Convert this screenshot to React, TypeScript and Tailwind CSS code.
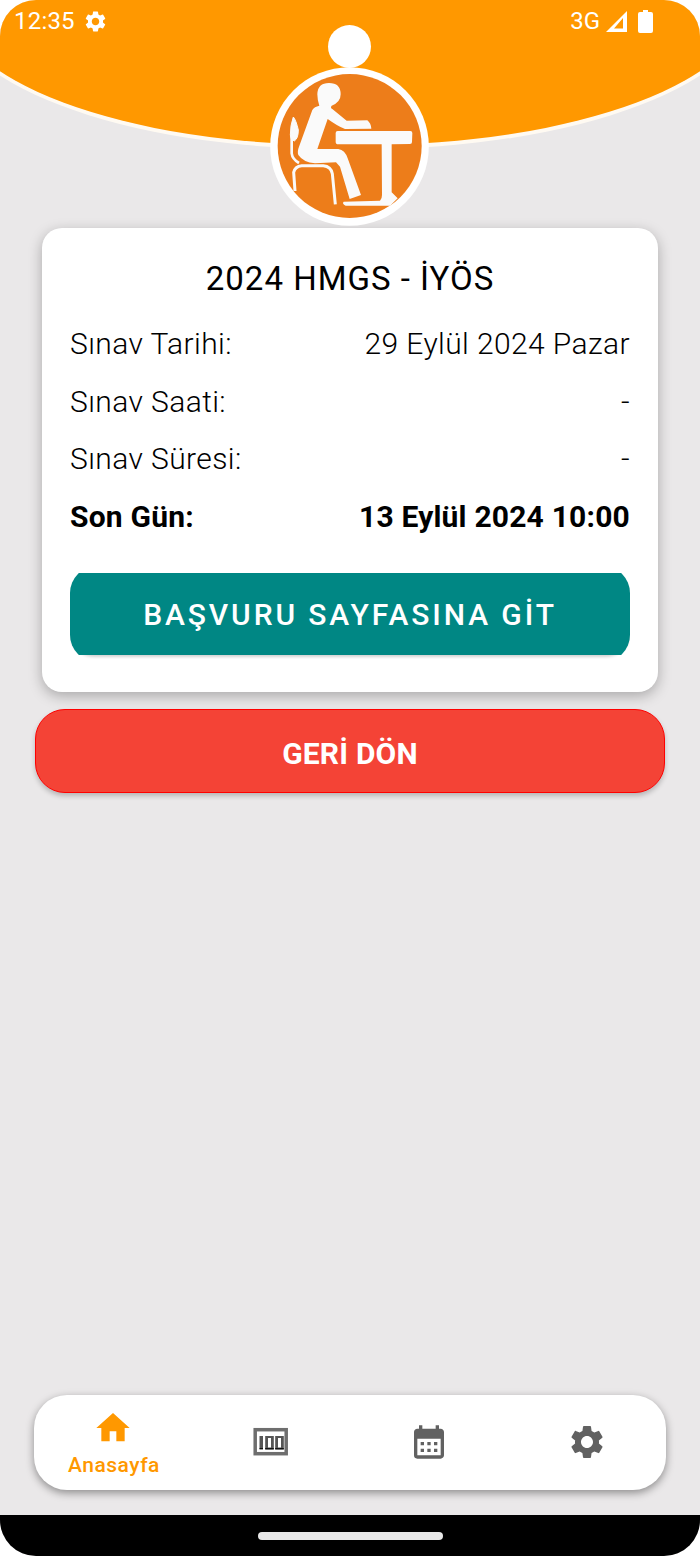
import { MdHome, MdSettings, MdCalendarMonth } from "react-icons/md";

const rows = [
  ["Sınav Tarihi:", "29 Eylül 2024 Pazar"],
  ["Sınav Saati:", "-"],
  ["Sınav Süresi:", "-"],
];

function Logo() {
  return (
    <svg viewBox="0 0 477 477" className="block w-[159px] h-[159px]">
      <circle cx="238.5" cy="238.5" r="238" fill="#ffffff" />
      <circle cx="239" cy="237" r="216" fill="#ed7d1a" />
      <g transform="translate(15 24)" fill="#fafafa">
        <path d="M162 24 Q197 24 197 58 Q197 82 170 92 Q165 98 172 102 L215 137 L277 136 Q288 145 289 161 L210 162 Q190 155 158 132 L127 222 L190 222 Q210 225 218 250 L258 360 L224 372 L195 275 L183 262 L120 265 Q85 262 70 240 Q66 230 72 215 L112 105 Q118 95 133 92 Q127 75 127 58 Q128 24 162 24 Z" />
        <path d="M188 168 L406 168 Q412 168 412 174 L411 201 Q411 207 405 207 L350 208 L350 352 L368 370 L345 392 L212 392 Q200 386 206 380 L315 377 Q321 372 321 360 L320 208 L190 208 Q182 208 182 200 L182 174 Q182 168 188 168 Z" />
      </g>
      <g transform="translate(15 24)" fill="none" stroke="#fafafa">
        <path d="M50 180 L50 235 Q52 252 72 264" strokeWidth="8" />
        <path d="M55 126 Q63 135 70 165 Q70 190 58 198 Q46 195 46 180 Q46 150 55 126 Z" fill="#fafafa" strokeWidth="3" />
        <path d="M60 348 L56 292 Q60 274 80 272 L145 272 Q168 274 172 296 L181 388" strokeWidth="9" />
      </g>
    </svg>
  );
}

function ScoreIcon() {
  return (
    <svg viewBox="0 0 36 36" className="block w-[36px] h-[36px]">
      <rect x="2.2" y="5.7" width="31" height="24" fill="none" stroke="#6e6e6e" strokeWidth="3.5" />
      <rect x="6.5" y="12" width="3.5" height="13" fill="#555555" />
      <rect x="6.5" y="24" width="3.5" height="1.4" fill="#111111" />
      <rect x="12.2" y="12" width="8.6" height="13.4" fill="#555555" />
      <rect x="15" y="14" width="3" height="9.5" fill="#ffffff" />
      <rect x="12.2" y="24" width="8.6" height="1.4" fill="#111111" />
      <rect x="22.2" y="12" width="8.6" height="13.4" fill="#555555" />
      <rect x="25" y="14" width="3" height="9.5" fill="#ffffff" />
      <rect x="22.2" y="24" width="8.6" height="1.4" fill="#111111" />
    </svg>
  );
}

export default function App() {
  return (
    <div className="bg-white w-[700px] h-[1556px] font-['Roboto',sans-serif]">
      <div className="relative w-[700px] h-[1556px] bg-[#eae8e9] rounded-[36px] overflow-hidden flex flex-col">
        <div className="absolute inset-x-0 top-0 h-[42px] flex items-center justify-between pl-[14px] pr-[47px] text-white z-10">
          <div className="flex items-center gap-[10px]">
            <span className="text-[24px] leading-[30px] tracking-[0.2px]">12:35</span>
            <MdSettings className="w-[25px] h-[25px] -ml-[2px]" />
          </div>
          <div className="flex items-center">
            <span className="text-[24px] leading-[30px]">3G</span>
            <svg viewBox="0 0 21 21" className="ml-[6px] w-[21px] h-[21px]">
              <path d="M21 0 L21 21 L0 21 Z M17 7 L8 17.5 L17 17.5 Z" fill="#ffffff" fillRule="evenodd" />
            </svg>
            <svg viewBox="0 0 15 23" className="ml-[11px] w-[15px] h-[23px]">
              <path d="M5 0 H10 V2 H13 Q15 2 15 4 V21 Q15 23 13 23 H2 Q0 23 0 21 V4 Q0 2 2 2 H5 Z" fill="#ffffff" />
            </svg>
          </div>
        </div>

        <div className="relative shrink-0 h-[228px]">
          <div className="w-[800px] -ml-[50px] h-[145px] bg-[#ff9800] shadow-[0_0_0_4px_#fffaf2] rounded-b-[400px_150px]" />
          <div className="absolute left-[328px] top-[25px] w-[43px] h-[43px] rounded-full bg-white" />
          <div className="absolute left-[270px] top-[67px]">
            <Logo />
          </div>
        </div>

        <div className="mx-[42px] h-[464px] bg-white rounded-[20px] shadow-[0_4px_14px_rgba(0,0,0,0.28)] px-[28px] pt-[32px] flex flex-col text-black">
          <h1 className="text-[33px] leading-[38px] font-normal tracking-[1px] text-center">2024 HMGS - İYÖS</h1>
          <div className="mt-[26px] flex flex-col gap-[17.67px] text-[30px] leading-[40px] font-light tracking-[0.4px]">
            {rows.map(([a, b]) => (
              <div key={a} className="flex justify-between">
                <span>{a}</span>
                <span>{b}</span>
              </div>
            ))}
            <div className="flex justify-between font-bold tracking-[0.2px]">
              <span>Son Gün:</span>
              <span>13 Eylül 2024 10:00</span>
            </div>
          </div>
          <div className="mt-[36px] h-[86px] overflow-hidden">
            <div className="h-[82px] rounded-b-[24px] shadow-[0_2px_3px_rgba(0,0,0,0.18)]">
              <div className="h-[82px] overflow-hidden">
                <div className="-mt-[7px] pt-[1px] h-[96px] rounded-[27px] bg-[#008784] flex items-center justify-center text-white text-[30px] font-medium tracking-[2.9px]">
                  BAŞVURU SAYFASINA GİT
                </div>
              </div>
            </div>
          </div>
        </div>

        <div className="mt-[17px] mx-[35px] h-[84px] pt-[4px] rounded-[30px] bg-[#f44336] border border-[#ff0000] shadow-[0_3px_5px_rgba(0,0,0,0.22)] flex items-center justify-center text-white text-[30px] font-bold tracking-[0.2px]">
          GERİ DÖN
        </div>

        <div className="mt-auto mx-[34px] mb-[25px] h-[95px] rounded-[33px] bg-white shadow-[0_3px_8px_rgba(0,0,0,0.4)] grid grid-cols-4">
          <div className="flex flex-col items-center pt-[13px] text-[#ff9800]">
            <MdHome className="w-[40px] h-[40px]" />
            <span className="text-[21px] leading-[24px] font-medium tracking-[0.5px] mt-[5px] ml-[2px]">Anasayfa</span>
          </div>
          <div className="flex items-center justify-center pb-[2px]">
            <ScoreIcon />
          </div>
          <div className="flex items-center justify-center pb-[2px] text-[#616161]">
            <MdCalendarMonth className="w-[40px] h-[40px]" />
          </div>
          <div className="flex items-center justify-center pb-[2px] text-[#616161]">
            <MdSettings className="w-[40px] h-[40px]" />
          </div>
        </div>

        <div className="h-[41px] shrink-0 bg-black flex items-center justify-center">
          <div className="w-[185px] h-[8px] rounded-full bg-[#e8e8e8]" />
        </div>
      </div>
    </div>
  );
}
